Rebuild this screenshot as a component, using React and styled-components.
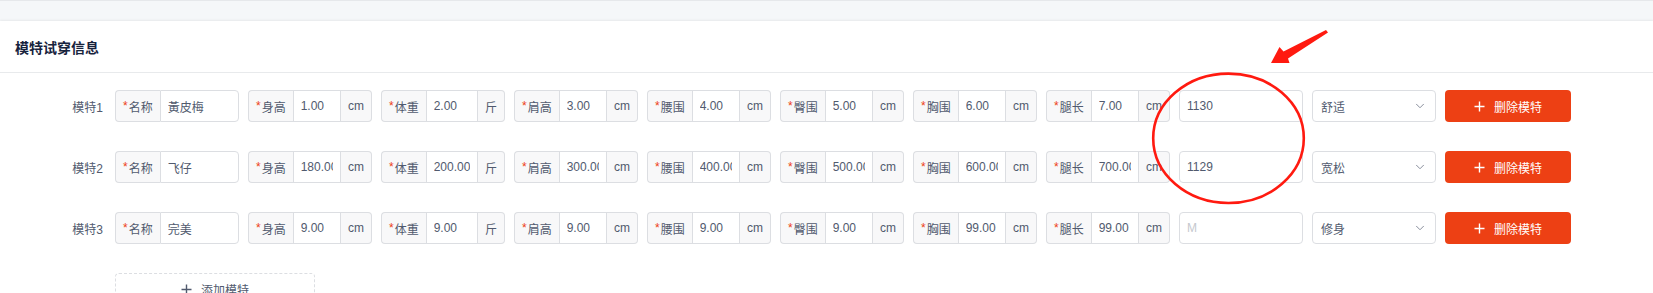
import React from "react";
import styled, { createGlobalStyle } from "styled-components";
import { ChevronDown } from "lucide-react";

const GlobalStyle = createGlobalStyle`
  body {
    margin: 0;
    background: #fff;
    font-family: "Liberation Sans", "Noto Sans CJK SC", sans-serif;
    font-size: 12px;
    color: #515a6e;
  }
`;

const Page = styled.div`
  position: relative;
  width: 1653px;
  height: 293px;
  overflow: hidden;
`;

const TopStrip = styled.div`
  height: 20px;
  background: #f5f7f9;
  border-top: 1px solid #e6e8eb;
`;

const Card = styled.div`
  background: #fff;
  box-shadow: 0 -1px 2px rgba(0, 0, 0, 0.06);
`;

const CardHead = styled.div`
  height: 51px;
  display: flex;
  align-items: center;
  padding: 0 15px;
  border-bottom: 1px solid #e8eaec;
  font-size: 14px;
  font-weight: bold;
  color: #17233d;
`;

const CardBody = styled.div`
  display: flex;
  flex-direction: column;
  gap: 29px;
  padding: 17px 15px 0;
`;

const Row = styled.div`
  display: flex;
  align-items: center;
`;

const Label = styled.div`
  width: 100px;
  box-sizing: border-box;
  padding-right: 12px;
  text-align: right;
  color: #515a6e;
`;

const Fields = styled.div`
  display: flex;
  gap: 9px;
`;

const Group = styled.div`
  display: flex;
  width: 124px;
  height: 32px;
`;

const Addon = styled.span`
  display: flex;
  align-items: center;
  padding: 0 7px;
  background: #f8f8f9;
  border: 1px solid #dcdee2;
  color: #515a6e;
  white-space: nowrap;
  border-radius: ${(p) => (p.$side === "left" ? "4px 0 0 4px" : "0 4px 4px 0")};
  ${(p) => (p.$side === "left" ? "border-right: 0;" : "border-left: 0;")}
`;

const Star = styled.span`
  color: #ed4014;
  margin-right: 1px;
`;

const Input = styled.input`
  flex: 1;
  min-width: 0;
  box-sizing: border-box;
  height: 32px;
  padding: 4px 7px;
  border: 1px solid #dcdee2;
  border-radius: ${(p) => (p.$solo ? "4px" : p.$last ? "0 4px 4px 0" : "0")};
  font: inherit;
  font-size: 12px;
  color: #515a6e;
  background: #fff;
  outline: none;
  &::placeholder {
    color: #c5c8ce;
  }
`;

const Select = styled.div`
  width: 124px;
  height: 32px;
  box-sizing: border-box;
  display: flex;
  align-items: center;
  justify-content: space-between;
  padding: 0 8px;
  border: 1px solid #dcdee2;
  border-radius: 4px;
  color: #515a6e;
  svg {
    color: #808695;
  }
`;

const DangerButton = styled.button`
  width: 126px;
  height: 32px;
  display: flex;
  align-items: center;
  justify-content: center;
  gap: 9px;
  border: 0;
  border-radius: 4px;
  background: #ed4014;
  color: #fff;
  font: inherit;
  font-size: 12px;
`;

const AddButton = styled.button`
  margin-left: 100px;
  width: 200px;
  height: 32px;
  display: flex;
  align-items: center;
  justify-content: center;
  gap: 9px;
  background: #fff;
  border: 1px dashed #dcdee2;
  border-radius: 4px;
  color: #515a6e;
  font: inherit;
  font-size: 12px;
`;

const Overlay = styled.svg`
  position: absolute;
  top: 0;
  left: 0;
  pointer-events: none;
`;

const PlusIcon = () => (
  <svg width="11" height="11" viewBox="0 0 11 11">
    <path d="M5.5 0.5v10M0.5 5.5h10" stroke="currentColor" strokeWidth="1.4" fill="none" />
  </svg>
);

const measures = [
  ["身高", "h", "cm"],
  ["体重", "w", "斤"],
  ["肩高", "s", "cm"],
  ["腰围", "waist", "cm"],
  ["臀围", "hip", "cm"],
  ["胸围", "chest", "cm"],
  ["腿长", "leg", "cm"],
];

const models = [
  { name: "黃皮梅", h: "1.00", w: "2.00", s: "3.00", waist: "4.00", hip: "5.00", chest: "6.00", leg: "7.00", size: "1130", fit: "舒适" },
  { name: "飞仔", h: "180.00", w: "200.00", s: "300.00", waist: "400.00", hip: "500.00", chest: "600.00", leg: "700.00", size: "1129", fit: "宽松" },
  { name: "完美", h: "9.00", w: "9.00", s: "9.00", waist: "9.00", hip: "9.00", chest: "99.00", leg: "99.00", size: "", fit: "修身" },
];

function ModelRow({ index, model }) {
  return (
    <Row>
      <Label>模特{index + 1}</Label>
      <Fields>
        <Group>
          <Addon $side="left"><Star>*</Star>名称</Addon>
          <Input $last readOnly value={model.name} />
        </Group>
        {measures.map(([label, key, unit]) => (
          <Group key={key}>
            <Addon $side="left"><Star>*</Star>{label}</Addon>
            <Input readOnly value={model[key]} />
            <Addon $side="right">{unit}</Addon>
          </Group>
        ))}
        <Group>
          <Input $solo readOnly value={model.size} placeholder="M" />
        </Group>
        <Select>
          <span>{model.fit}</span>
          <ChevronDown size={14} strokeWidth={1.6} />
        </Select>
        <DangerButton>
          <PlusIcon />
          删除模特
        </DangerButton>
      </Fields>
    </Row>
  );
}

export default function App() {
  return (
    <>
      <GlobalStyle />
      <Page>
        <TopStrip />
        <Card>
          <CardHead>模特试穿信息</CardHead>
          <CardBody>
            {models.map((m, i) => (
              <ModelRow key={i} index={i} model={m} />
            ))}
            <Row>
              <AddButton>
                <PlusIcon />
                添加模特
              </AddButton>
            </Row>
          </CardBody>
        </Card>
        <Overlay width="1653" height="293">
          <ellipse cx="1228.5" cy="138.3" rx="75.3" ry="64.7" fill="none" stroke="#ff1a10" strokeWidth="2.6" />
          <polygon
            points="1271,63 1279.5,47 1283.5,51.5 1326,30 1328,32.5 1288,58.5 1289.5,63"
            fill="#ff1a10"
          />
        </Overlay>
      </Page>
    </>
  );
}
